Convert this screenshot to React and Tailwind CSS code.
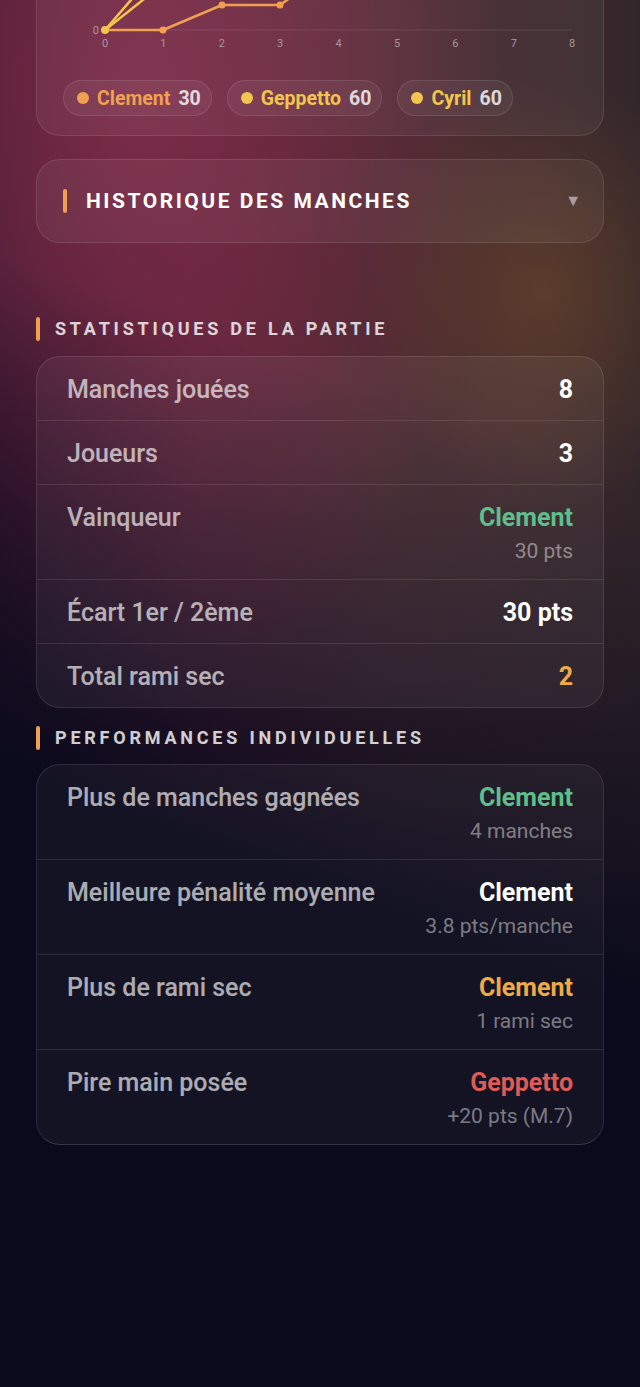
import React from 'react';

const players = [
  { name: 'Clement', score: 30, color: 'text-[#f0a050]', dot: 'bg-[#f0a050]' },
  { name: 'Geppetto', score: 60, color: 'text-[#f2c64e]', dot: 'bg-[#f2c64e]' },
  { name: 'Cyril', score: 60, color: 'text-[#f2c64e]', dot: 'bg-[#f2c64e]' },
];

const stats = [
  { label: 'Manches jouées', value: '8', tone: 'text-white' },
  { label: 'Joueurs', value: '3', tone: 'text-white' },
  { label: 'Vainqueur', value: 'Clement', sub: '30 pts', tone: 'text-[#5dbf8a]' },
  { label: 'Écart 1er / 2ème', value: '30 pts', tone: 'text-white' },
  { label: 'Total rami sec', value: '2', tone: 'text-[#eeaa45]' },
];

const perfs = [
  { label: 'Plus de manches gagnées', value: 'Clement', sub: '4 manches', tone: 'text-[#5dbf8a]' },
  { label: 'Meilleure pénalité moyenne', value: 'Clement', sub: '3.8 pts/manche', tone: 'text-white' },
  { label: 'Plus de rami sec', value: 'Clement', sub: '1 rami sec', tone: 'text-[#eeaa45]' },
  { label: 'Pire main posée', value: 'Geppetto', sub: '+20 pts (M.7)', tone: 'text-[#de5b57]' },
];

function Chart() {
  const x0 = 68;
  const step = 58.4;
  const xs = [0, 1, 2, 3, 4, 5, 6, 7, 8];
  return (
    <svg width="568" height="60" viewBox="0 0 568 60" className="block">
      <line x1={x0} y1="30" x2={x0 + step * 8} y2="30" stroke="rgba(255,255,255,0.1)" strokeWidth="1" />
      <text x="62" y="34" textAnchor="end" fontSize="11" fill="#a8969f" fontFamily="Roboto">0</text>
      {xs.map(i => (
        <text key={i} x={x0 + step * i} y="47" textAnchor="middle" fontSize="11" fill="#a8969f" fontFamily="Roboto">{i}</text>
      ))}
      <polyline points={`${x0},30 ${x0 + 58},-37`} fill="none" stroke="#f2c64e" strokeWidth="2.5" />
      <polyline points={`${x0},30 ${x0 + 58},-16`} fill="none" stroke="#f2c64e" strokeWidth="2.5" />
      <polyline points={`${x0},30 126,30 185,5 243,5 301,-36`} fill="none" stroke="#f0a050" strokeWidth="2.5" strokeLinejoin="round" />
      <circle cx={x0} cy="30" r="4" fill="#f2c64e" />
      <circle cx="126" cy="30" r="3.5" fill="#f0a050" />
      <circle cx="185" cy="5" r="3.5" fill="#f0a050" />
      <circle cx="243" cy="5" r="3.5" fill="#f0a050" />
    </svg>
  );
}

function SectionTitle({ children }) {
  return (
    <div className="flex items-center gap-[15px]">
      <span className="w-1 h-6 rounded-full bg-[#f0a050]" />
      <span className="text-[18px] font-bold tracking-[0.21em] text-white/80 leading-none">{children}</span>
    </div>
  );
}

function Row({ label, value, sub, tone }) {
  return (
    <div className="flex justify-between items-start px-[30px] pt-[19px] pb-[16px]">
      <span className="text-[25px] leading-[28px] font-medium text-white/65">{label}</span>
      <div className="flex flex-col items-end">
        <span className={`text-[25px] leading-[28px] font-bold ${tone}`}>{value}</span>
        {sub && <span className="mt-[7px] text-[21px] leading-[24px] text-white/45">{sub}</span>}
      </div>
    </div>
  );
}

export default function App() {
  return (
    <div className="min-h-screen w-full px-9 pb-20 font-['Roboto',sans-serif] bg-[#0a0a1c] bg-[radial-gradient(ellipse_180px_220px_at_85%_21%,rgba(130,85,45,0.45),transparent),linear-gradient(200deg,transparent_30%,#0a0a1c_62%),radial-gradient(ellipse_360px_620px_at_22%_6%,#7b2c47,transparent),linear-gradient(90deg,#3a1530,#5a2238_30%,#4a2a30_60%,#33262a)]">
      <div className="rounded-b-3xl border border-t-0 border-white/10 bg-white/[0.05] overflow-hidden">
        <Chart />
        <div className="flex gap-[15px] px-[26px] pt-5 pb-[19px]">
          {players.map(p => (
            <div key={p.name} className="flex items-center h-9 pt-[2px] pl-[13px] pr-[10px] rounded-full border border-white/10 bg-white/[0.05]">
              <span className={`w-3 h-3 -mt-[2px] rounded-full ${p.dot}`} />
              <span className={`ml-2 text-[19.5px] font-bold ${p.color}`}>{p.name}</span>
              <span className="ml-2 text-[19.5px] font-bold text-white/80">{p.score}</span>
            </div>
          ))}
        </div>
      </div>

      <div className="mt-[23px] h-[84px] rounded-3xl border border-white/10 bg-white/[0.05] flex items-center pl-[26px] pr-[22px]">
        <span className="w-1 h-6 rounded-full bg-[#f0a050]" />
        <span className="ml-[19px] pt-[2px] text-[21px] font-bold tracking-[0.12em] text-white">HISTORIQUE DES MANCHES</span>
        <span className="ml-auto text-[16px] text-white/50">▼</span>
      </div>

      <div className="mt-[74px]">
        <SectionTitle>STATISTIQUES DE LA PARTIE</SectionTitle>
      </div>
      <div className="mt-[15px] rounded-3xl border border-white/10 bg-white/[0.05] divide-y divide-white/10">
        {stats.map(s => <Row key={s.label} {...s} />)}
      </div>

      <div className="mt-[18px]">
        <SectionTitle>PERFORMANCES INDIVIDUELLES</SectionTitle>
      </div>
      <div className="mt-[14px] rounded-3xl border border-white/10 border-b-white/15 bg-white/[0.04] divide-y divide-white/10">
        {perfs.map(s => <Row key={s.label} {...s} />)}
      </div>
    </div>
  );
}
